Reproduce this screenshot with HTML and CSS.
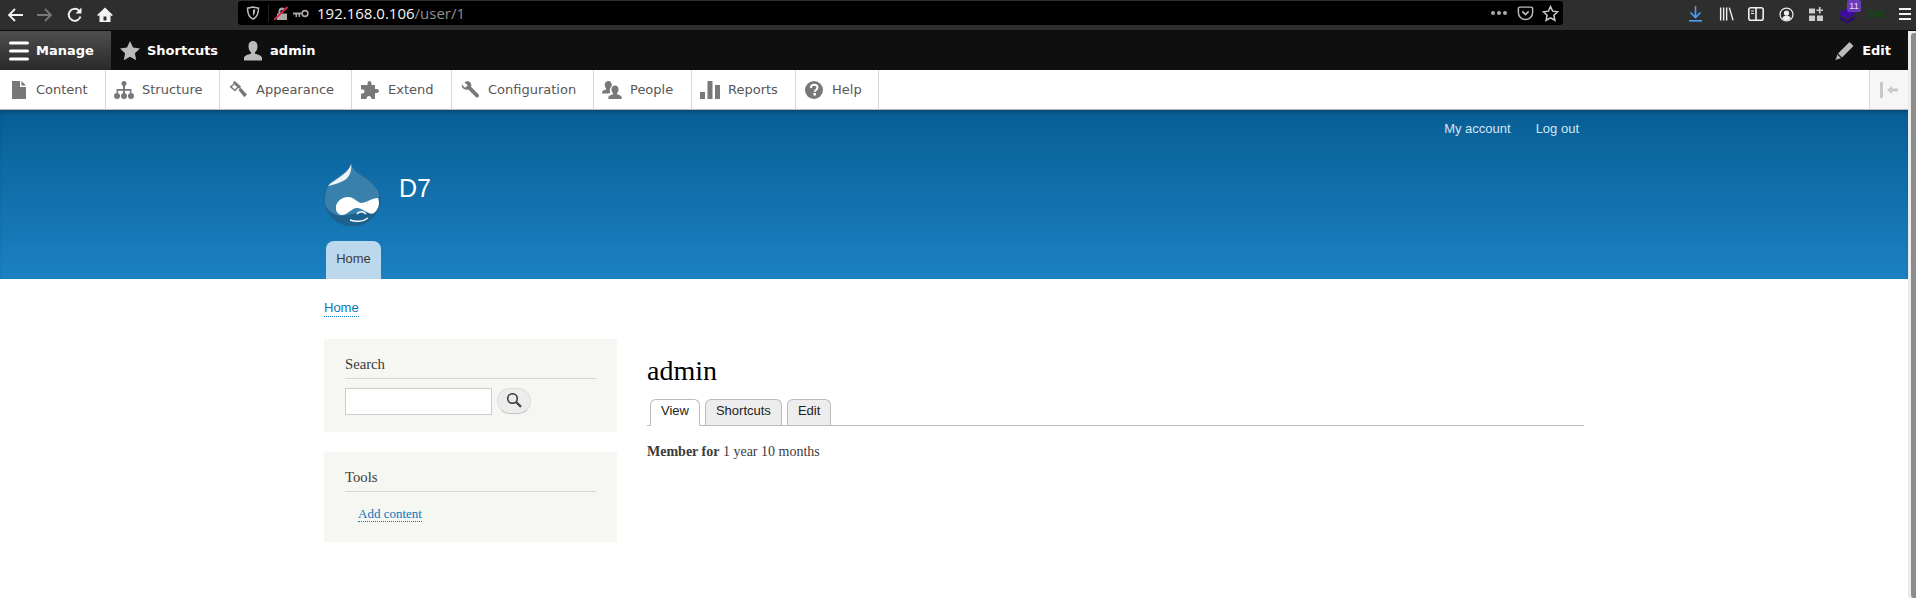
FILE: index.html
```html
<!DOCTYPE html>
<html lang="en">
<head>
<meta charset="UTF-8" />
<title>admin | D7</title>
<link rel="stylesheet" href="styles.css">
</head>
<body>
  <!-- browser chrome -->
  <div class="browser">
    <div class="nav-btns">
      <svg class="b-ico" viewBox="0 0 18 18"><path d="M17 9H3M9 3L3 9l6 6" fill="none" stroke="#f4f4f4" stroke-width="1.8"/></svg>
      <svg class="b-ico" viewBox="0 0 18 18"><path d="M1 9h14M9 3l6 6-6 6" fill="none" stroke="#777" stroke-width="1.8"/></svg>
      <svg class="b-ico" viewBox="0 0 18 18"><path d="M14.500 10.500A6 6 0 1 1 13 4.600" fill="none" stroke="#f4f4f4" stroke-width="1.9"/><path d="M15.500 1.500v6h-6z" fill="#f4f4f4"/></svg>
      <svg class="b-ico" viewBox="0 0 18 18"><path d="M9 1.500L1.200 9l1 1.200 1.300-1.100V16h11V9.100l1.300 1.100 1-1.200zM7.500 14.500v-4h3v4z" fill="#f4f4f4"/></svg>
    </div>
    <div class="urlbar">
      <svg class="shield" viewBox="0 0 14 14"><path d="M7 1l5.500 1.200c0 5-1 8.800-5.500 10.800C2.500 11 1.500 7.200 1.500 2.200z" fill="none" stroke="#bbb" stroke-width="1.500"/><path d="M7 3.500h2.200c0 3-.5 5-2.200 6.300z" fill="#bbb"/></svg>
      <span class="url-sep"></span>
      <svg class="lock" viewBox="0 0 14 14"><path d="M3 14V7.500h1.500V5a3.500 3.500 0 0 1 6-2.400L9 4.200A1.600 1.600 0 0 0 6.400 5v2.500h6.600V14z" fill="#aaa"/><path d="M0 14L13.500 1" stroke="#e22850" stroke-width="1.800"/></svg>
      <svg class="key" viewBox="0 0 16 9"><circle cx="12" cy="4.500" r="2.900" fill="none" stroke="#aaa" stroke-width="1.600"/><path d="M0 3.500h8.500v2H7v2.500H5.500V5.500H4V8H2.500V5.500H0z" fill="#aaa"/></svg>
      <span class="url"><span class="url-host">192.168.0.106</span>/user/1</span>
      <span class="url-end">
        <span class="dots"><i></i><i></i><i></i></span>
        <svg class="u-ico" viewBox="0 0 16 16"><path d="M2.500 2h11a1.200 1.200 0 0 1 1.200 1.200V7a6.700 6.700 0 0 1-13.400 0V3.200A1.200 1.200 0 0 1 2.500 2z" fill="none" stroke="#bbb" stroke-width="1.400"/><path d="M5 6l3 3 3-3" fill="none" stroke="#bbb" stroke-width="1.600"/></svg>
        <svg class="u-ico" viewBox="0 0 16 16"><path d="M8 1.500l2 4.300 4.700.6-3.500 3.200.9 4.700L8 12l-4.100 2.300.9-4.700L1.300 6.400 6 5.800z" fill="none" stroke="#ccc" stroke-width="1.400"/></svg>
      </span>
    </div>
    <div class="side-icons">
      <svg class="dl" viewBox="0 0 13 16"><path d="M6.500 0v11M1.500 6.500l5 5 5-5" fill="none" stroke="#45a1ff" stroke-width="1.600"/><path d="M0 14.800h13" stroke="#45a1ff" stroke-width="1.600"/></svg>
      <svg class="lib" viewBox="0 0 16 14"><path d="M1 0h1.500v14H1zM4.200 0h1.500v14H4.200zM7.400 0h1.500v14H7.400zM10.300.4l1.400-.4 4 13.500-1.400.5z" fill="#f0f0f0"/></svg>
      <svg class="side" viewBox="0 0 16 14"><rect x=".8" y=".8" width="14.400" height="12.400" rx="2" fill="none" stroke="#f0f0f0" stroke-width="1.600"/><path d="M8 1v12" stroke="#f0f0f0" stroke-width="1.600"/><path d="M3 4h3M3 6.500h3" stroke="#f0f0f0"/></svg>
      <svg class="acct" viewBox="0 0 16 16"><circle cx="8" cy="8" r="6.900" fill="none" stroke="#f0f0f0" stroke-width="1.300"/><circle cx="8" cy="6.500" r="2.800" fill="#f0f0f0"/><path d="M3.300 12c1-2 3-2.600 4.700-2.600s3.700.6 4.700 2.600A6 6 0 0 1 8 14a6 6 0 0 1-4.700-2z" fill="#f0f0f0"/></svg>
      <svg class="apps" viewBox="0 0 15 15"><path d="M0 1.500h6.500V7H0zM0 9h6.500v6H0zM8.500 9H15v6H8.500z" fill="#ccc"/><path d="M11.500 0v7M8 3.500h7" stroke="#ccc" stroke-width="1.800"/></svg>
      <span class="ext">
        <svg viewBox="0 0 18 16"><path d="M9 0l9 5.500-9 5.500-9-5.500z" fill="#3d0d9c"/><path d="M1.500 9.500L9 14.300l7.500-4.800" fill="none" stroke="#2c0a70" stroke-width="2.600"/></svg>
        <span class="ext-badge">11</span>
      </span>
      <span class="bw">bw</span>
      <svg class="burger" viewBox="0 0 12 12"><path d="M0 1h12M0 6h12M0 11h12" stroke="#f4f4f4" stroke-width="2"/></svg>
    </div>
  </div>

  <div class="window">
    <div class="page">
      <!-- admin toolbar -->
      <div class="toolbar">
        <a class="bar-item active"><svg class="bar-ico" viewBox="0 0 20 20"><path d="M1.500 2h17M1.500 10h17M1.500 18h17" stroke="#fff" stroke-width="3" stroke-linecap="round" fill="none"/></svg>Manage</a>
        <a class="bar-item"><svg class="bar-ico" viewBox="0 0 20 20"><path d="M10 0l3 6.500 7 .9-5.100 4.800 1.300 7L10 15.800l-6.200 3.400 1.300-7L0 7.400l7-.9z" fill="#bbb"/></svg>Shortcuts</a>
        <a class="bar-item user"><svg class="bar-ico" viewBox="0 0 20 20"><path d="M10 0c3 0 4.500 2.300 4.500 5.500 0 2.500-1 4.700-2.500 5.700v1.500c3.200.8 7 2 7 4.300v2.500H1v-2.500c0-2.300 3.800-3.500 7-4.300v-1.500C6.500 10.200 5.500 8 5.500 5.500 5.500 2.300 7 0 10 0z" fill="#bbb"/></svg>admin</a>
        <a class="bar-item edit"><svg class="bar-ico" viewBox="0 0 20 20"><path d="M14.500 1l4 4L7 16.500l-4-4zM2.300 13.500l3.700 3.700-4.500 1.300-.8.800-.5-.5.800-.8z" fill="#bbb"/></svg>Edit</a>
      </div>
      <div class="tray">
        <a class="tray-item w-content"><svg class="tray-ico" viewBox="0 0 20 18"><path d="M4 0h8v6h6v12H4zM13.500 0L18 4.500h-4.500z" fill="#787878"/></svg>Content</a>
        <a class="tray-item w-structure"><svg class="tray-ico" viewBox="0 0 20 18"><circle cx="10" cy="2.500" r="2.500" fill="#787878"/><path d="M9 4h2v4h6.500v4H16V9.800h-5V12H9V9.800H4V12H2.500V8H9z" fill="#787878"/><circle cx="3" cy="15" r="3" fill="#787878"/><circle cx="10" cy="15" r="3" fill="#787878"/><circle cx="17" cy="15" r="3" fill="#787878"/></svg>Structure</a>
        <a class="tray-item w-appear"><svg class="tray-ico" viewBox="0 0 20 20"><path d="M6.500 0l7 6.500-2 2-1.300-.8-3.500 4L.5 6.500 5 3 4.500 1.500zM3.300 6.500l3.200 3L9 6.800 5.800 3.800z" fill="#787878"/><path d="M10.500 10l2.500-2.500 7 7.500-3 3z" fill="#787878"/></svg>Appearance</a>
        <a class="tray-item w-extend"><svg class="tray-ico" viewBox="0 0 20 18"><path d="M4 4h3.500V2.500C7.500 1 8.500 0 9.500 0s2 1 2 2.500V4H15v4h1.500c1.300 0 2.500.7 2.500 2s-1.200 2-2.500 2H15v6h-3.500c0-1.600-1-3-2.500-3s-2.500 1.400-2.500 3H1v-5.500h1c1.300 0 2.500-.8 2.500-2.300S3.300 8.500 2 8.500H1V4z" fill="#787878"/></svg>Extend</a>
        <a class="tray-item w-config"><svg class="tray-ico" viewBox="0 0 20 20"><path d="M1 4l3.500 3.500L7.500 5 4 1.500C6-.3 9.500.2 10.800 2.500c.7 1.300.8 2.800.3 4l8.300 8.300c.8.800.8 2.200 0 3s-2.200.8-3 0L8.100 9.500C5.500 10.300 2.500 9.300 1.300 7 .8 6.100.7 5 1 4z" fill="#787878"/></svg>Configuration</a>
        <a class="tray-item w-people"><svg class="tray-ico" viewBox="0 0 22 20"><path d="M7 0c2.500 0 3.700 2 3.700 4.200 0 .8-.1 1.500-.4 2.200-1.300 1.100-1.900 2.800-1.700 4.800.1.800.4 1.500.7 2L6 14H0v-1.500c0-1.500 2-2.500 4.500-3v-1C3.500 7.500 3 6 3 4.200 3 2 4.500 0 7 0z" fill="#787878"/><path d="M14.500 5c2.500 0 3.800 2 3.800 4.200 0 1.800-.7 3.400-1.800 4.300v1.200c2.700.6 5.200 1.700 5.200 3.300v2H7v-2c0-1.600 2.500-2.700 5.200-3.300v-1.200c-1.100-.9-1.800-2.500-1.800-4.300C10.400 7 12 5 14.500 5z" fill="#787878"/></svg>People</a>
        <a class="tray-item w-reports"><svg class="tray-ico" viewBox="0 0 20 18"><path d="M0 11h5v7H0zM7.500 0h5v18h-5zM15 4h5v14h-5z" fill="#787878"/></svg>Reports</a>
        <a class="tray-item w-help"><svg class="tray-ico" viewBox="0 0 18 18"><circle cx="9" cy="9" r="9" fill="#787878"/><path d="M5.800 6.800C6 4.800 7.300 3.700 9.200 3.700c2 0 3.300 1.200 3.300 2.800 0 2.500-2.700 2.400-2.700 4.300" fill="none" stroke="#fff" stroke-width="2"/><rect x="8.400" y="12" width="2.500" height="2.500" fill="#fff"/></svg>Help</a>
        <a class="tray-toggle"><svg viewBox="0 0 20 16"><path d="M1 0h3v16H1zM8 8l5-4v2.500h6v3h-6V12z" fill="#c8c8c8"/></svg></a>
      </div>

      <!-- site header -->
      <div class="header">
        <div class="container">
          <ul class="secondary">
            <li><a>My account</a></li>
            <li><a>Log out</a></li>
          </ul>
          <div class="brand">
            <svg class="logo" viewBox="0 0 58 64">
              <path d="M27 1C28 7 33 11 40 15 50 21 57 29 57 36A28.500 28.500 0 0 1 0 36C0 24 8 19 14 15 20 11 26 7 27 1z" fill="#1d618f"/>
              <path d="M27 1C28 7 33 11 40 15 46 19 52 24 55 31L55 40 40 50 16 54C8 52 3 48 1 42 0 24 8 19 14 15 20 11 26 7 27 1z" fill="#3a80ac"/>
              <path d="M27 2C26 8 19 13 13 17 9 20 6 21 4 24 9 23 16 21 21 18 26 14 28 8 27 2z" fill="#eef4f8"/>
              <path d="M12 47C11 41 17 35 24 35 30 35 33 40 37 41 42 41 48 36 54 36 56 41 55 47 50 51 46 54 40 47 34 46 28 45 24 53 18 53 15 53 12 50 12 47z" fill="#fff"/>
              <path d="M26 58C31 60 39 60 44 56M33 52C35 49 39 49 42 52" fill="none" stroke="#fff" stroke-width="1.500"/>
            </svg>
            <span class="site-name">D7</span>
          </div>
          <ul class="main-menu"><li><a>Home</a></li></ul>
        </div>
      </div>

      <div class="container content">
        <a class="crumb">Home</a>
        <div class="columns">
          <div class="sidebar">
            <div class="block">
              <h2>Search</h2>
              <form class="search">
                <input type="text">
                <button type="button"><svg viewBox="0 0 16 16"><circle cx="6.500" cy="6.500" r="4.800" fill="none" stroke="#333" stroke-width="1.500"/><path d="M10 10l5 4.800" stroke="#444" stroke-width="2.400"/></svg></button>
              </form>
            </div>
            <div class="block">
              <h2>Tools</h2>
              <p class="tool-link"><a>Add content</a></p>
            </div>
          </div>
          <div class="main">
            <h1>admin</h1>
            <ul class="tabs">
              <li class="on"><a>View</a></li>
              <li><a>Shortcuts</a></li>
              <li><a>Edit</a></li>
            </ul>
            <p class="member"><b>Member for</b> 1 year 10 months</p>
          </div>
        </div>
      </div>
    </div>
    <div class="scrollbar"><div class="thumb"></div></div>
  </div>
</body>
</html>
```

FILE: styles.css
```css
*{
  box-sizing: border-box;
}
html, body{
  margin: 0;
  height: 100%;
  overflow: hidden;
}
body{
  display: flex;
  flex-direction: column;
  background: white;
  font-family: "Liberation Serif", serif;
  color: #3b3b3b;
}
ul{
  list-style: none;
  margin: 0;
  padding: 0;
}

/* browser */
.browser{
  height: 31px;
  flex: none;
  display: flex;
  align-items: center;
  background: #2e2e2e;
  border-bottom: 1px solid #0c0c0c;
}
.nav-btns{
  width: 238px;
  flex: none;
  display: flex;
  gap: 12px;
  padding-left: 6px;
  padding-bottom: 1px;
}
.b-ico{
  width: 18px;
  height: 18px;
}
.urlbar{
  width: 1325px;
  height: 24px;
  margin-top: -4px;
  flex: none;
  display: flex;
  align-items: center;
  background: black;
  border-radius: 3px;
  padding-left: 8px;
}
.shield{
  width: 14px;
  height: 14px;
}
.url-sep{
  width: 1px;
  height: 18px;
  background: #222;
  margin: 0 5px 0 8px;
}
.lock{
  width: 14px;
  height: 14px;
}
.key{
  width: 16px;
  height: 9px;
  margin-left: 5px;
}
.url{
  margin-left: 8px;
  font: 15px "Open Sans", sans-serif;
  color: #8f8f8f;
  white-space: nowrap;
}
.url-host{
  color: #f5f5f5;
}
.url-end{
  margin-left: auto;
  display: flex;
  align-items: center;
  gap: 8px;
  padding-right: 4px;
}
.dots{
  display: flex;
  gap: 2px;
  margin-right: 2px;
}
.dots i{
  width: 4px;
  height: 4px;
  border-radius: 50%;
  background: #aaa;
}
.u-ico{
  width: 17px;
  height: 17px;
}
.side-icons{
  flex: 1;
  display: flex;
  align-items: center;
  gap: 15px;
  padding-left: 126px;
  padding-bottom: 2px;
  height: 100%;
}
.side-icons > *{
  flex: none;
}
.dl{
  width: 13px;
  height: 16px;
  margin-right: 2px;
}
.lib{
  width: 15px;
  height: 14px;
  margin-right: -1px;
}
.side{
  width: 16px;
  height: 14px;
}
.acct{
  width: 15px;
  height: 15px;
}
.apps{
  width: 14px;
  height: 14px;
}
.ext{
  position: relative;
  width: 23px;
  height: 24px;
  margin-right: -8px;
}
.ext svg{
  position: absolute;
  left: 0;
  top: 6px;
  width: 18px;
  height: 16px;
}
.ext-badge{
  position: absolute;
  left: 9px;
  top: -2px;
  width: 14px;
  height: 12px;
  background: #6a3bb8;
  border-radius: 2px;
  color: #e6e0f5;
  font: 9px/12px "Liberation Sans", sans-serif;
  text-align: center;
}
.bw{
  width: 16px;
  font: bold 12px/20px "Liberation Sans", sans-serif;
  color: #0e4a10;
}
.burger{
  width: 12px;
  height: 12px;
}

/* page + scrollbar */
.window{
  flex: 1;
  display: flex;
  min-height: 0;
}
.page{
  flex: 1;
  min-width: 0;
}
.scrollbar{
  width: 8px;
  background: #ececec;
  padding: 2px 0 0 3px;
}
.thumb{
  height: 100%;
  background: #8c8c8c;
  border-radius: 3px 0 0 3px;
}

/* toolbar */
.toolbar{
  height: 39px;
  display: flex;
  background: #0f0f0f;
  font: bold 13px "DejaVu Sans", sans-serif;
  color: white;
}
.bar-item{
  display: flex;
  align-items: center;
  padding: 0 16px 0 9px;
  gap: 7px;
}
.bar-item.active{
  width: 111px;
  background: linear-gradient(#4e4e4e, #2a2a2a);
}
.bar-ico{
  width: 20px;
  height: 20px;
  flex: none;
}
.bar-item.edit{
  margin-left: auto;
  padding-right: 17px;
}
.tray{
  height: 40px;
  display: flex;
  background: white;
  border-bottom: 1px solid #bbb;
  font: 13px "DejaVu Sans", sans-serif;
  color: #565656;
}
.tray-item{
  display: flex;
  align-items: center;
  gap: 8px;
  padding-left: 8px;
  border-right: 1px solid #d8d8d8;
}
.tray-ico{
  width: 20px;
  height: 18px;
  flex: none;
}
.w-content{ width: 106px; }
.w-structure{ width: 114px; }
.w-appear{ width: 132px; }
.w-extend{ width: 100px; }
.w-config{ width: 142px; }
.w-people{ width: 98px; }
.w-reports{ width: 104px; }
.w-help{ width: 83px; }
.tray-toggle{
  margin-left: auto;
  width: 39px;
  display: flex;
  align-items: center;
  justify-content: center;
  background: #f6f6f6;
  border-left: 1px solid #d8d8d8;
}
.tray-toggle svg{
  width: 20px;
  height: 16px;
}

/* header */
.container{
  width: 1260px;
  margin-left: 324px;
}
.header{
  height: 169px;
  background: linear-gradient(#085e95, #1b81c2);
  box-shadow: inset 0 4px 4px -2px rgba(0, 0, 0, .25);
  font-family: "Liberation Sans", sans-serif;
  overflow: hidden;
}
.header .container{
  height: 100%;
  display: flex;
  flex-direction: column;
}
.secondary{
  display: flex;
  justify-content: flex-end;
  gap: 25px;
  padding: 11px 5px 0 0;
  font-size: 13px;
  line-height: 16px;
  color: #d3e6f3;
}
.brand{
  display: flex;
  align-items: center;
  margin-top: 25px;
  height: 64px;
}
.logo{
  width: 58px;
  height: 64px;
}
.site-name{
  margin-left: 17px;
  font-size: 25px;
  color: white;
  padding-bottom: 11px;
}
.main-menu{
  margin-top: auto;
  padding-left: 2px;
}
.main-menu a{
  display: block;
  width: 55px;
  height: 38px;
  background: #bcd8ec;
  border-radius: 8px 8px 0 0;
  font-size: 13px;
  line-height: 36px;
  text-align: center;
  color: #3b3b3b;
}

/* content */
.crumb, .tool-link a{
  color: #0678be;
  border-bottom: 1px dotted #0678be;
}
.crumb{
  display: inline-block;
  margin-top: 20px;
  font: 13px/17px "Liberation Sans", sans-serif;
}
.columns{
  display: flex;
  margin-top: 22px;
}
.sidebar{
  width: 293px;
  flex: none;
}
.block{
  background: #f6f6f2;
  padding: 16px 21px;
  margin-bottom: 20px;
}
.block:first-child{
  height: 93px;
}
.block:last-child{
  height: 90px;
}
.block h2{
  margin: 0;
  height: 24px;
  font-size: 14.700px;
  font-weight: normal;
  line-height: 18px;
  border-bottom: 1px solid #d6d6d6;
}
.search{
  display: flex;
  margin-top: 9px;
  gap: 5px;
}
.search input{
  width: 147px;
  height: 27px;
  border: 1px solid #ccc;
  background: white;
  padding: 0;
}
.search button{
  width: 34px;
  height: 26px;
  border: 1px solid #ddd;
  border-bottom-color: #c4c4c4;
  border-radius: 13px;
  background: #ececec;
  padding: 0 0 3px;
  display: flex;
  align-items: center;
  justify-content: center;
}
.search button svg{
  width: 16px;
  height: 16px;
}
.tool-link{
  margin: 14px 0 0 13px;
  font-size: 13px;
  line-height: 16px;
}
.main{
  flex: 1;
  margin-left: 30px;
}
.main h1{
  margin: 14px 0 0;
  font-size: 28px;
  font-weight: normal;
  line-height: 36px;
  color: black;
}
.tabs{
  display: flex;
  gap: 5px;
  margin-top: 10px;
  height: 27px;
  padding-left: 3px;
  border-bottom: 1px solid #bbb;
  font: 13px "Liberation Sans", sans-serif;
  color: #222;
}
.tabs li{
  height: 26px;
  padding: 0 10px;
  background: #ededed;
  border: 1px solid #bbb;
  border-bottom: 0;
  border-radius: 6px 6px 0 0;
  line-height: 22px;
}
.tabs li.on{
  height: 27px;
  background: white;
}
.member{
  margin: 17px 0 0;
  font-size: 14px;
  line-height: 18px;
}
```
